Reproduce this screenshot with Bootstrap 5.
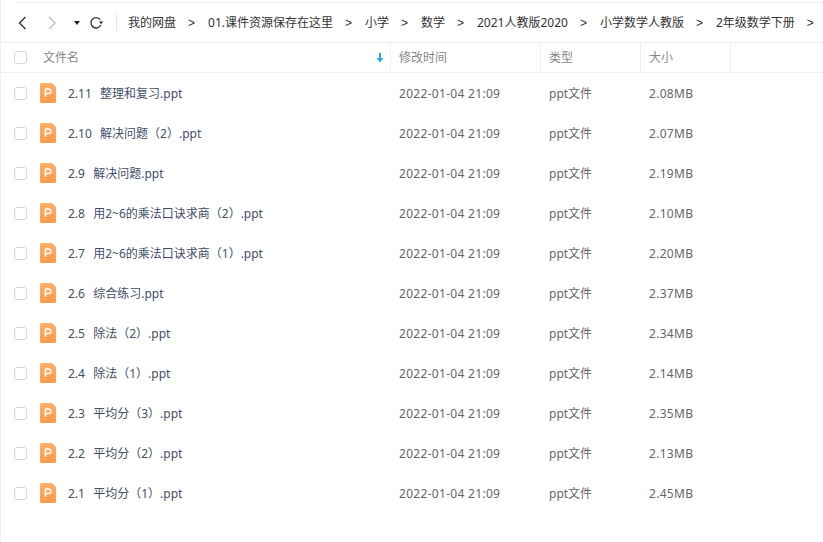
<!DOCTYPE html>
<html lang="zh-CN">
<head>
    <meta charset="UTF-8">
    <title>我的网盘</title>
    <link href="https://cdn.jsdelivr.net/npm/bootstrap@5.3.0/dist/css/bootstrap.min.css" rel="stylesheet">
    <style>
        html, body { height: 100%; overflow: hidden; }
        body {
            font-family: "Noto Sans", "Noto Sans CJK SC", sans-serif;
            font-size: 12px;
            color: #666;
            background: #fff;
        }
        .pan-shell { height: 100%; border-left: 1px solid #f0f0f0; padding-top: 2px; }
        .pan-topline { height: 1px; background: #f0f0f0; margin-left: 15px; flex: none; }
        .pan-toolbar { height: 40px; border-bottom: 1px solid #f0f0f0; padding-left: 15px; flex: none; }
        .nav-icon { display: block; flex: none; }
        .nav-next { margin-left: 18px; }
        .nav-drop { margin-left: 15px; }
        .nav-refresh { margin-left: 8px; }
        .tool-divider { width: 1px; height: 17px; background: #e4e4e4; margin: 0 11px 0 12px; flex: none; }
        .crumbs { color: #333; white-space: nowrap; overflow: hidden; }
        .crumbs b { font-weight: 400; font-family: "Liberation Sans", sans-serif; width: 7px; margin: 0 13px 0 12px; display: inline-block; text-align: center; }
        .head-row { height: 30px; border-bottom: 1px solid #f0f0f0; color: #888; flex: none; }
        .file-row { height: 40px; }
        .pick-box { width: 13px; height: 13px; border: 1px solid #d8d8d8; border-radius: 3px; margin-left: 13px; flex: none; background: #fff; }
        .col-name { width: 323px; flex: none; }
        .col-name-head { width: 363px; flex: none; padding-left: 16px; padding-right: 6px; }
        .col-time { width: 150px; flex: none; padding-left: 8px; }
        .col-type { width: 100px; flex: none; padding-left: 8px; }
        .col-size { width: 90px; flex: none; padding-left: 8px; }
        .head-row .col-time, .head-row .col-type, .head-row .col-size { border-left: 1px solid #f0f0f0; height: 100%; display: flex; align-items: center; }
        .head-row .col-size { border-right: 1px solid #f0f0f0; width: 91px; }
        .file-row .col-name, .file-row .col-time, .file-row .col-type, .file-row .col-size { padding-top: 2px; }
        .file-icon { margin-left: 13px; margin-right: 12px; flex: none; }
        .file-name { color: #424e67; white-space: pre; word-spacing: 1px; }
        .num-text { letter-spacing: .3px; }
    </style>
</head>
<body>
    <div class="pan-shell d-flex flex-column">
        <div class="pan-topline"></div>
        <div class="pan-toolbar d-flex align-items-center">
            <svg class="nav-icon" width="12" height="14" viewBox="0 0 12 14"><path d="M9.5 1 3.5 7l6 6" fill="none" stroke="#333" stroke-width="1.4"/></svg>
            <svg class="nav-icon nav-next" width="12" height="14" viewBox="0 0 12 14"><path d="M3 1l6 6-6 6" fill="none" stroke="#bbb" stroke-width="1.4"/></svg>
            <svg class="nav-icon nav-drop" width="8" height="6" viewBox="0 0 8 6"><path d="M1 1h6L4 5z" fill="#222"/></svg>
            <svg class="nav-icon nav-refresh" width="15" height="14" viewBox="0 0 15 14"><path d="M11.3 3.6A5.2 5.2 0 1 0 11.9 9" fill="none" stroke="#333" stroke-width="1.3"/><path d="M9.8 5.6h4.6l-2.3 2.6z" fill="#333"/></svg>
            <div class="tool-divider"></div>
            <div class="crumbs">我的网盘<b>&gt;</b>01.课件资源保存在这里<b>&gt;</b>小学<b>&gt;</b>数学<b>&gt;</b>2021人教版2020<b>&gt;</b>小学数学人教版<b>&gt;</b>2年级数学下册<b>&gt;</b></div>
        </div>
        <div class="head-row d-flex align-items-center">
            <span class="pick-box"></span>
            <div class="col-name-head d-flex align-items-center justify-content-between">
                <span>文件名</span>
                <svg width="8" height="10" viewBox="0 0 8 10"><path d="M4 0v6" stroke="#2aa6f5" stroke-width="2"/><path d="M0.5 5h7L4 9.5z" fill="#2aa6f5"/></svg>
            </div>
            <div class="col-time">修改时间</div>
            <div class="col-type">类型</div>
            <div class="col-size">大小</div>
        </div>
        <div id="rows"></div>
    </div>

    <script src="https://cdn.jsdelivr.net/npm/bootstrap@5.3.0/dist/js/bootstrap.bundle.min.js"></script>
    <script>
        const files = [
            ["2.11  整理和复习.ppt", "2.08MB"],
            ["2.10  解决问题（2）.ppt", "2.07MB"],
            ["2.9  解决问题.ppt", "2.19MB"],
            ["2.8  用2~6的乘法口诀求商（2）.ppt", "2.10MB"],
            ["2.7  用2~6的乘法口诀求商（1）.ppt", "2.20MB"],
            ["2.6  综合练习.ppt", "2.37MB"],
            ["2.5  除法（2）.ppt", "2.34MB"],
            ["2.4  除法（1）.ppt", "2.14MB"],
            ["2.3  平均分（3）.ppt", "2.35MB"],
            ["2.2  平均分（2）.ppt", "2.13MB"],
            ["2.1  平均分（1）.ppt", "2.45MB"]
        ];
        const icon = `<svg class="file-icon" width="16" height="20" viewBox="0 0 16 20">
            <defs><linearGradient id="pg" x1="0" y1="0" x2="0" y2="1"><stop offset="0" stop-color="#ffae6b"/><stop offset="1" stop-color="#fd9a4c"/></linearGradient></defs>
            <path d="M1.5 0H12l4 4v14.5a1.5 1.5 0 0 1-1.5 1.5h-13A1.5 1.5 0 0 1 0 18.5v-17A1.5 1.5 0 0 1 1.5 0z" fill="url(#pg)"/>
            <path d="M5.5 13.5V6h3.2a2.1 2.1 0 0 1 0 4.4H5.5" fill="none" stroke="#fff" stroke-width="1.5"/></svg>`;
        document.getElementById("rows").innerHTML = files.map(f => `
            <div class="file-row d-flex align-items-center">
                <span class="pick-box"></span>
                ${icon}
                <div class="col-name file-name">${f[0]}</div>
                <div class="col-time num-text">2022-01-04 21:09</div>
                <div class="col-type">ppt文件</div>
                <div class="col-size num-text">${f[1]}</div>
            </div>`).join("");
    </script>
</body>
</html>
